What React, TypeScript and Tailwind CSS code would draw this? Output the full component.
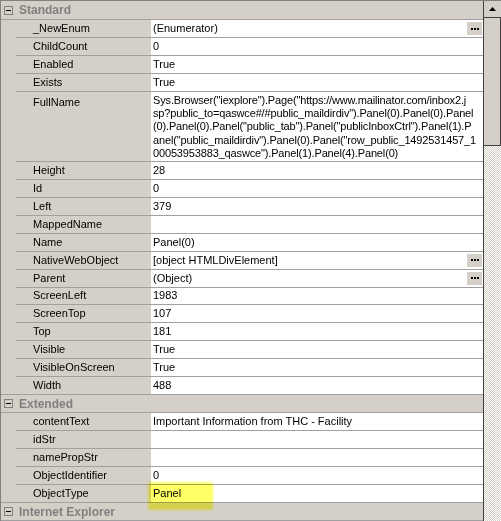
import React from "react"

type Row =
  | { kind: "cat"; label: string; first?: boolean }
  | { kind: "prop"; name: string; value?: string; lines?: string[]; btn?: boolean; full?: boolean }

const rows: Row[] = [
  { kind: "cat", label: "Standard", first: true },
  { kind: "prop", name: "_NewEnum", value: "(Enumerator)", btn: true },
  { kind: "prop", name: "ChildCount", value: "0" },
  { kind: "prop", name: "Enabled", value: "True" },
  { kind: "prop", name: "Exists", value: "True" },
  {
    kind: "prop",
    name: "FullName",
    lines: [
      'Sys.Browser("iexplore").Page("https://www.mailinator.com/inbox2.j',
      'sp?public_to=qaswce#/#public_maildirdiv").Panel(0).Panel(0).Panel',
      '(0).Panel(0).Panel("public_tab").Panel("publicInboxCtrl").Panel(1).P',
      'anel("public_maildirdiv").Panel(0).Panel("row_public_1492531457_1',
      '00053953883_qaswce").Panel(1).Panel(4).Panel(0)',
    ],
  },
  { kind: "prop", name: "Height", value: "28" },
  { kind: "prop", name: "Id", value: "0" },
  { kind: "prop", name: "Left", value: "379" },
  { kind: "prop", name: "MappedName", value: "" },
  { kind: "prop", name: "Name", value: "Panel(0)" },
  { kind: "prop", name: "NativeWebObject", value: "[object HTMLDivElement]", btn: true },
  { kind: "prop", name: "Parent", value: "(Object)", btn: true },
  { kind: "prop", name: "ScreenLeft", value: "1983" },
  { kind: "prop", name: "ScreenTop", value: "107" },
  { kind: "prop", name: "Top", value: "181" },
  { kind: "prop", name: "Visible", value: "True" },
  { kind: "prop", name: "VisibleOnScreen", value: "True" },
  { kind: "prop", name: "Width", value: "488", full: true },
  { kind: "cat", label: "Extended" },
  { kind: "prop", name: "contentText", value: "Important Information from THC - Facility" },
  { kind: "prop", name: "idStr", value: "" },
  { kind: "prop", name: "namePropStr", value: "" },
  { kind: "prop", name: "ObjectIdentifier", value: "0" },
  { kind: "prop", name: "ObjectType", value: "Panel", full: true },
  { kind: "cat", label: "Internet Explorer" },
]

function MinusBox() {
  return (
    <div className="ml-[3px] mr-[6px] flex h-[9px] w-[9px] items-center justify-center border border-[#808080] bg-[#d4d0c8]">
      <div className="h-px w-[5px] bg-black" />
    </div>
  )
}

function Dots() {
  return (
    <div className="ml-auto mr-px mt-[2px] flex h-[13px] w-[15px] items-center justify-center gap-px bg-[#d4d0c8]">
      <div className="h-[2px] w-[2px] bg-black" />
      <div className="h-[2px] w-[2px] bg-black" />
      <div className="h-[2px] w-[2px] bg-black" />
    </div>
  )
}

function CategoryRow({ label, first }: { label: string; first?: boolean }) {
  return (
    <div className={`flex items-center border-b border-[#a0a0a0] ${first ? "h-[19px]" : "h-[18px]"}`}>
      <MinusBox />
      <span className="text-[12px] font-bold text-[#808080]">{label}</span>
    </div>
  )
}

function PropRow({ row }: { row: Extract<Row, { kind: "prop" }> }) {
  const tall = !!row.lines
  return (
    <div className={`flex ${tall ? "h-[70px]" : "h-[18px]"}`}>
      <div className={`w-[15px] shrink-0 ${row.full ? "border-b border-[#a0a0a0]" : ""}`} />
      <div className={`w-[135px] shrink-0 border-b border-[#a0a0a0] pl-[17px] ${tall ? "pt-[2px]" : "flex items-center"}`}>
        <span className="leading-[13px] text-black">{row.name}</span>
      </div>
      <div className={`flex min-w-0 flex-1 border-b border-[#a0a0a0] bg-white pl-[2px] ${tall ? "flex-col pt-[2px]" : "items-start"}`}>
        {tall ? (
          row.lines!.map((l) => (
            <div key={l} className="whitespace-nowrap leading-[13.3px] tracking-[-0.15px] text-black">
              {l}
            </div>
          ))
        ) : (
          <>
            <span className="self-center whitespace-nowrap leading-[13px] text-black">{row.value}</span>
            {row.btn && <Dots />}
          </>
        )}
      </div>
    </div>
  )
}

export default function App() {
  return (
    <div
      className="relative flex h-[521px] w-[501px] overflow-hidden border-l border-t border-[#808080] bg-[#d4d0c8] text-[11px]"
      style={{ fontFamily: '"Liberation Sans", Arial, sans-serif' }}
    >
      <div className="flex min-w-0 flex-1 flex-col">
        {rows.map((r, i) =>
          r.kind === "cat" ? (
            <CategoryRow key={i} label={r.label} first={r.first} />
          ) : (
            <PropRow key={i} row={r} />
          )
        )}
      </div>

      {/* scrollbar */}
      <div className="flex w-[18px] shrink-0 flex-col border-l border-[#404040]">
        <div className="flex h-[17px] items-center justify-center border-b border-[#404040] bg-[#d4d0c8]">
          <svg width="7" height="4" viewBox="0 0 7 4" className="mb-px">
            <path d="M3.5 0 L7 4 L0 4 Z" fill="#000" />
          </svg>
        </div>
        <div className="h-[128px] border-b border-r border-[#404040] bg-[#d4d0c8]" />
        <div className="flex-1 bg-[repeating-conic-gradient(#d4d0c8_0_25%,#ffffff_0_50%)] bg-[length:2px_2px]" />
      </div>

      {/* highlight marker */}
      <div className="pointer-events-none absolute left-[147px] top-[481px] h-[28px] w-[65px] rounded-[3px] bg-[#ffff00]/60 mix-blend-multiply blur-[1px]" />
    </div>
  )
}
